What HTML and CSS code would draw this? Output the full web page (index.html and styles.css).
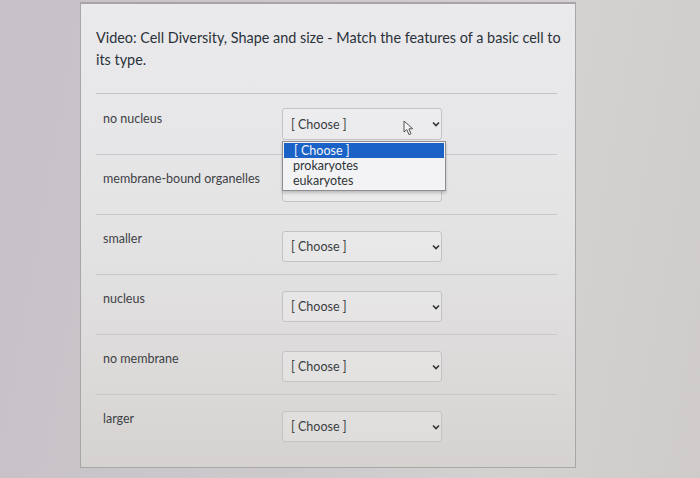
FILE: index.html
```html
<!DOCTYPE html>
<html>
<head>
<meta charset="utf-8">
<link rel="stylesheet" href="styles.css">
</head>
<body>
<div class="screen">
  <div class="panel">
    <h1 class="title">Video: Cell Diversity, Shape and size - Match the features of a basic cell to its type.</h1>
    <div class="rows">
      <div class="row first">
        <span class="label">no nucleus</span>
        <div class="select">
          <span>[ Choose ]</span>
          <svg class="cursor" width="12" height="16" viewBox="0 0 12 16"><path d="M1 1 L1 12 L3.8 9.6 L6 14.6 L8 13.7 L5.9 8.9 L9.6 8.7 Z" fill="#f4f4f4" stroke="#555" stroke-width="1" stroke-linejoin="round"/></svg>
          <svg class="chev" width="8" height="6" viewBox="0 0 8 6"><polyline points="1,1.5 4,4.5 7,1.5" fill="none" stroke="#333" stroke-width="1.6"/></svg>
          <ul class="menu">
            <li class="hl">[ Choose ]</li>
            <li>prokaryotes</li>
            <li>eukaryotes</li>
          </ul>
        </div>
      </div>
      <div class="row">
        <span class="label">membrane-bound organelles</span>
        <div class="select covered"><span>[ Choose ]</span><svg class="chev" width="8" height="6" viewBox="0 0 8 6"><polyline points="1,1.5 4,4.5 7,1.5" fill="none" stroke="#333" stroke-width="1.6"/></svg></div>
      </div>
      <div class="row">
        <span class="label">smaller</span>
        <div class="select"><span>[ Choose ]</span><svg class="chev" width="8" height="6" viewBox="0 0 8 6"><polyline points="1,1.5 4,4.5 7,1.5" fill="none" stroke="#333" stroke-width="1.6"/></svg></div>
      </div>
      <div class="row">
        <span class="label">nucleus</span>
        <div class="select"><span>[ Choose ]</span><svg class="chev" width="8" height="6" viewBox="0 0 8 6"><polyline points="1,1.5 4,4.5 7,1.5" fill="none" stroke="#333" stroke-width="1.6"/></svg></div>
      </div>
      <div class="row">
        <span class="label">no membrane</span>
        <div class="select"><span>[ Choose ]</span><svg class="chev" width="8" height="6" viewBox="0 0 8 6"><polyline points="1,1.5 4,4.5 7,1.5" fill="none" stroke="#333" stroke-width="1.6"/></svg></div>
      </div>
      <div class="row last">
        <span class="label">larger</span>
        <div class="select"><span>[ Choose ]</span><svg class="chev" width="8" height="6" viewBox="0 0 8 6"><polyline points="1,1.5 4,4.5 7,1.5" fill="none" stroke="#333" stroke-width="1.6"/></svg></div>
      </div>
    </div>
  </div>
</div>
</body>
</html>
```

FILE: styles.css
```css
html, body {
  margin: 0;
  padding: 0;
}
body {
  width: 700px;
  height: 478px;
  overflow: hidden;
  font-family: Lato, "Open Sans", sans-serif;
  background: linear-gradient(100deg, #c6c0c7 0%, #cdc9cb 45%, #d4d1d1 75%, #cecbca 100%);
}
.screen {
  display: flex;
  padding: 2px 0 0 80px;
  height: 476px;
  box-sizing: border-box;
}
.panel {
  width: 496px;
  height: 466px;
  box-sizing: border-box;
  border: 1px solid #a9a6aa;
  border-top: 2px solid #a8a3a9;
  background: linear-gradient(180deg, #eae9ec 0%, #e5e4e5 45%, #dcdad9 80%, #d5d2d0 100%);
  padding: 23px 18px 0 15px;
}
.title {
  margin: 0 -14px 0 0;
  font-size: 14.4px;
  line-height: 22px;
  font-weight: 400;
  color: #2b333a;
  padding-bottom: 22px;
}
.rows {
  display: flex;
  flex-direction: column;
  border-top: 1px solid #c4c3c6;
}
.row {
  display: grid;
  grid-template-columns: 179px 160px;
  padding-left: 7px;
  height: 60px;
  box-sizing: border-box;
  border-bottom: 1px solid #c8c7ca;
  align-items: start;
}
.row.first {
  height: 61px;
}
.row.last {
  border-bottom: none;
}
.label {
  font-size: 12.5px;
  line-height: 16px;
  color: #3e4245;
  padding-top: 16px;
}
.row.first .label {
  padding-top: 17px;
}
.select {
  position: relative;
  margin-top: 16px;
  height: 31px;
  box-sizing: border-box;
  border: 1px solid #c3c2c5;
  border-radius: 3px;
  background: rgba(255, 255, 255, 0.22);
  display: flex;
  align-items: center;
  justify-content: space-between;
  padding: 0 1px 0 8px;
  font-size: 12.5px;
  color: #3a3e42;
}
.row.first .select {
  margin-top: 14px;
  height: 32px;
}
.select.covered span {
  visibility: hidden;
}
.chev {
  display: block;
}
.cursor {
  position: absolute;
  left: 120px;
  top: 11px;
}
.menu {
  position: absolute;
  left: -1px;
  top: 32px;
  width: 162px;
  margin: 0;
  padding: 1px 0 2px;
  list-style: none;
  background: #f3f3f5;
  border: 1px solid #8e8d92;
  box-shadow: 0 2px 3px rgba(0, 0, 0, 0.2);
  z-index: 2;
}
.menu li {
  font-size: 12.5px;
  line-height: 15px;
  padding-left: 10px;
  color: #2f3337;
}
.menu li.hl {
  background: #1b62c7;
  color: #f4f6fb;
  line-height: 15px;
  margin: 0 1px;
}
```
